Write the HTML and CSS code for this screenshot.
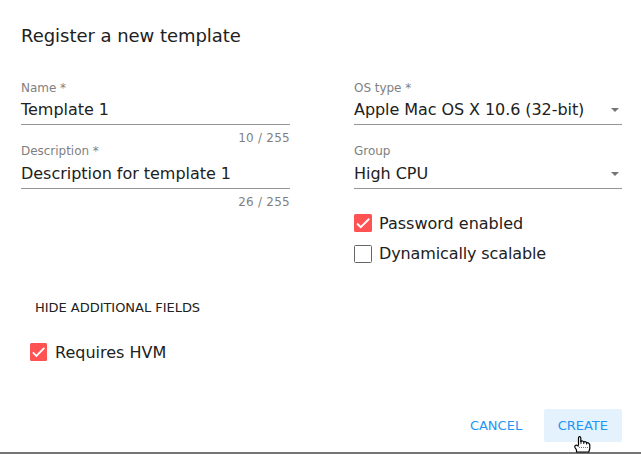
FILE: index.html
```html
<!DOCTYPE html>
<html lang="en">
<head>
<meta charset="utf-8">
<title>Register a new template</title>
<link rel="stylesheet" href="styles.css">
</head>
<body>
<main class="dialog">
  <h1 class="title">Register a new template</h1>
  <div class="columns">
    <div class="column">
      <div class="field">
        <div class="label">Name *</div>
        <div class="value">Template 1</div>
        <div class="hint">10 / 255</div>
      </div>
      <div class="field second">
        <div class="label">Description *</div>
        <div class="value">Description for template 1</div>
        <div class="hint">26 / 255</div>
      </div>
    </div>
    <div class="column">
      <div class="field">
        <div class="label">OS type *</div>
        <div class="value"><span class="os">Apple Mac OS X 10.6 (32-bit)</span><i class="arrow"></i></div>
      </div>
      <div class="field second">
        <div class="label">Group</div>
        <div class="value"><span>High CPU</span><i class="arrow"></i></div>
      </div>
      <div class="checks">
        <div class="check"><span class="box checked"><svg viewBox="0 0 24 24"><path d="M4.1 12.7 9 17.6 20.3 6.3"/></svg></span><span class="text">Password enabled</span></div>
        <div class="check"><span class="box"></span><span class="text tight">Dynamically scalable</span></div>
      </div>
    </div>
  </div>
  <button class="toggle">HIDE ADDITIONAL FIELDS</button>
  <div class="check extra"><span class="box checked"><svg viewBox="0 0 24 24"><path d="M4.1 12.7 9 17.6 20.3 6.3"/></svg></span><span class="text">Requires HVM</span></div>
  <div class="actions">
    <button class="action">CANCEL</button>
    <button class="action active">CREATE</button>
  </div>
</main>
<svg class="cursor" viewBox="0 0 17 17">
  <path fill="#fff" stroke="#000" stroke-width="1.2" stroke-linejoin="round" d="M4.5 9.5V2Q4.5.7 5.6.7T6.8 2V5.4Q7.4 4.6 8.5 5T9.7 6Q10.6 5.3 11.5 5.7T12.6 7Q13.5 6.3 14.5 7T15.8 9V12.5L14.8 16H2.5V14L1 11.5Q.4 9.8 1.7 9.2T4.5 10.5"/>
  <path fill="none" stroke="#000" d="M7 5.2v2.6M9.8 6v2M12.6 7v1.5"/>
  <path fill="none" stroke="#777" stroke-dasharray="1 1" d="M5 11.5h9"/>
</svg>
</body>
</html>
```

FILE: styles.css
```css
* {
  box-sizing: border-box;
}

body {
  margin: 0;
  height: 454px;
  overflow: hidden;
  background: #fff;
  color: #212121;
  font: 16px/18px "DejaVu Sans", sans-serif;
}

.dialog {
  display: flex;
  flex-direction: column;
  height: 454px;
  padding: 24px 19px 0 21px;
  border-bottom: 2px solid #747474;
}

.title {
  margin: 0 0 33px;
  font-size: 18px;
  font-weight: 400;
  letter-spacing: -0.04px;
  line-height: 24px;
}

.columns {
  display: flex;
  justify-content: space-between;
  height: 210px;
}

.column {
  width: 269px;
}

.column + .column {
  width: 268px;
}

.field {
  height: 63px;
}

.label,
.hint {
  color: #7f7f7f;
  font-size: 12px;
  line-height: 14px;
}

.label {
  letter-spacing: -0.03px;
}

.value {
  display: flex;
  justify-content: space-between;
  align-items: center;
  height: 30px;
  padding-top: 1px;
  border-bottom: 1px solid #949494;
  letter-spacing: -0.03px;
}

.os {
  letter-spacing: -0.07px;
}

.second {
  height: 65px;
}

.second .value {
  height: 31px;
  padding-top: 2px;
}

.hint {
  margin-top: 6px;
  letter-spacing: 0.25px;
  text-align: right;
}

.arrow {
  margin: 0 3px 1px 0;
  border: 4px solid transparent;
  border-top-color: #757575;
  border-bottom: 0;
}

.checks {
  display: grid;
  gap: 13px;
  padding-top: 5px;
}

.check {
  display: flex;
  align-items: center;
  gap: 7px;
  height: 18px;
}

.text {
  height: 18px;
  line-height: 19px;
}

.tight {
  line-height: 17px;
  letter-spacing: -0.12px;
}

.box {
  flex: none;
  width: 18px;
  height: 18px;
  border: 1px solid #666;
  border-radius: 1.5px;
}

.checked {
  border: 0;
  background: #ff5252;
}

.box svg {
  display: block;
  width: 18px;
  height: 18px;
  fill: none;
  stroke: #fff;
  stroke-width: 2.5;
}

button {
  padding: 0;
  border: 0;
  background: none;
  color: inherit;
  font: 13px/33px "DejaVu Sans", sans-serif;
}

.toggle {
  align-self: flex-start;
  margin-left: 14px;
  letter-spacing: -0.03px;
}

.extra {
  margin: 19px 0 0 9px;
  gap: 8px;
}

.extra .text {
  line-height: 19px;
}

.extra .box {
  width: 17px;
}

.extra svg {
  width: 17px;
}

.actions {
  display: flex;
  justify-content: flex-end;
  margin-top: 48px;
}

.action {
  height: 33px;
  padding: 0 14px;
  border-radius: 2px;
  color: #2196f3;
}

.action + .action {
  margin-left: 7.5px;
}

.active {
  background: #e3f2fd;
}

.cursor {
  position: absolute;
  left: 574px;
  top: 436px;
  width: 17px;
  height: 17px;
}
```
